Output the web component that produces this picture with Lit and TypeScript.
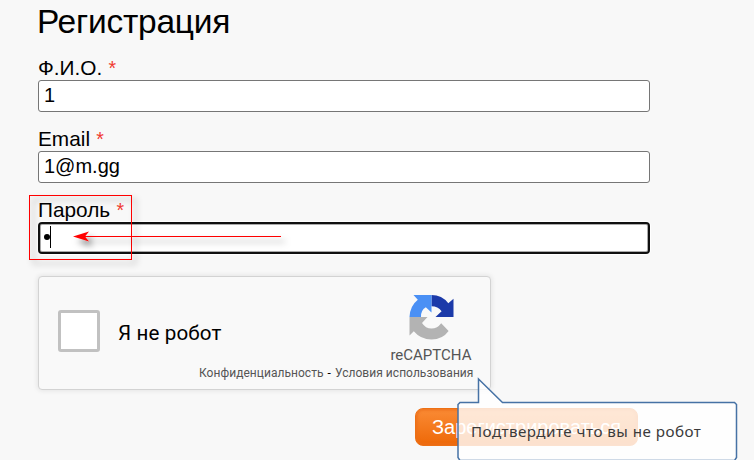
import { LitElement, html, css } from "lit";
import { customElement } from "lit/decorators.js";

@customElement("captcha-box")
class CaptchaBox extends LitElement {
  static styles = css`
    :host {
      display: flex;
      box-sizing: border-box;
      width: 453px;
      height: 114px;
      border: 1px solid #d3d3d3;
      border-radius: 4px;
      background: #f9f9f9;
      box-shadow: 0 0 5px 1px rgba(0, 0, 0, 0.08);
      font-family: Roboto, sans-serif;
      justify-content: space-between;
      padding: 0 17px 0 19px;
    }
    .check {
      display: flex;
      align-items: center;
      gap: 18px;
      height: 108px;
      white-space: nowrap;
      font-size: 20.6px;
      color: #000;
      width: 141px;
      flex: none;
    }
    .box {
      box-sizing: border-box;
      flex: none;
      width: 42px;
      height: 42px;
      border: 3px solid #c1c1c1;
      border-radius: 3px;
      background: #fff;
    }
    .name {
      position: relative;
      top: 2px;
      letter-spacing: 0.12px;
    }
    .brand {
      display: flex;
      flex-direction: column;
      align-items: flex-end;
      color: #555;
      padding-top: 17px;
      white-space: nowrap;
    }
    .logo {
      width: 46px;
      height: 47px;
      margin-right: 18.5px;
    }
    .title {
      font-size: 15px;
      line-height: 18px;
      margin: 5px 2px 0 0;
    }
    .links {
      font-size: 12px;
      line-height: 14px;
      margin-top: 2px;
      letter-spacing: 0.04px;
    }
    .dash {
      color: #000;
      margin: 0 1px;
    }
  `;
  render() {
    return html`
      <div class="check"><span class="box"></span><span class="name">Я не робот</span></div>
      <div class="brand">
        <svg class="logo" viewBox="0 0 46 47">
          <path fill="#1c3aa9" d="M22.500 1Q33 1 39.300 9.200L44.500 4.800V23H26.500L32.600 17.200Q29 12.300 22.500 12.300Z" />
          <path fill="#4a90f5" d="M22.500 1H4.500L8.800 5.800Q1 12 .5 23H12Q11.500 16.500 16.800 13.200L22.500 18.500Z" />
          <path fill="#b3b3b3" d="M.5 23V41.500L4.800 37.200Q11.800 45.500 22.500 45.500Q33.500 45.500 39.600 37L32.200 29.300Q28.500 34.500 22.500 34.500Q16.500 34.500 13 28.900L18.500 23Z" />
        </svg>
        <div class="title">reCAPTCHA</div>
        <div class="links">Конфиденциальность <span class="dash">-</span> Условия использования</div>
      </div>
    `;
  }
}

@customElement("app-root")
class AppRoot extends LitElement {
  static styles = css`
    :host {
      display: block;
      position: relative;
      box-sizing: border-box;
      width: 754px;
      height: 460px;
      overflow: hidden;
      background: #f8f8f8;
      padding-left: 38px;
      font-family: "Liberation Sans", Arial, sans-serif;
      color: #000;
    }
    h1 {
      margin: 0 0 0 -1px;
      height: 56px;
      box-sizing: border-box;
      padding-top: 2px;
      font-weight: 400;
      font-size: 33.5px;
      line-height: 39px;
      letter-spacing: -0.25px;
    }
    .field {
      width: 612px;
      height: 71px;
      font-size: 20.8px;
    }
    .label {
      height: 24px;
      line-height: 24px;
    }
    .star {
      color: #f03a30;
      font-size: 19.5px;
      margin-left: 0.5px;
    }
    .input {
      box-sizing: border-box;
      height: 32px;
      border: 1px solid #767676;
      border-radius: 3px;
      background: #fff;
      padding-left: 5px;
      font-size: 20px;
      line-height: 28px;
    }
    .focused {
      display: flex;
      align-items: center;
      border: 2px solid #101010;
      border-radius: 4px;
      padding: 0 0 2px 4px;
      box-shadow: 0 0 0 1px #fff, inset 0 0 0 1px #aaa;
    }
    .dot {
      width: 6px;
      height: 6px;
      border-radius: 3px;
      background: #000;
    }
    .caret {
      width: 1px;
      height: 22px;
      background: #000;
    }
    captcha-box {
      margin-top: 7px;
    }
    .button {
      box-sizing: border-box;
      width: 223px;
      height: 38px;
      margin: 18px 0 0 377px;
      border-radius: 8px;
      border: 1px solid #ee7014;
      background: linear-gradient(#fa8b35, #ee6807);
      box-shadow: inset 0 0 2px 2px rgba(235, 110, 25, 0.6);
      color: #fff;
      font-size: 20px;
      line-height: 36px;
      text-align: center;
      white-space: nowrap;
    }
    .overlay {
      position: absolute;
      left: 0;
      top: 0;
    }
    .tip {
      position: absolute;
      left: 471px;
      top: 421px;
      font: 15.2px/21px "Noto Sans", sans-serif;
      letter-spacing: 0.47px;
      color: #3a3a3a;
      white-space: nowrap;
    }
  `;

  field(label: string, value: unknown, focused = false) {
    return html`<div class="field">
      <div class="label">${label} <span class="star">*</span></div>
      <div class="input ${focused ? "focused" : ""}">${value}</div>
    </div>`;
  }

  render() {
    return html`
      <h1>Регистрация</h1>
      ${this.field("Ф.И.О.", "1")}
      ${this.field("Email", "1@m.gg")}
      ${this.field("Пароль", html`<span class="dot"></span><span class="caret"></span>`, true)}
      <captcha-box></captcha-box>
      <div class="button">Зарегистрироваться</div>
      <svg class="overlay" width="754" height="460" viewBox="0 0 754 460">
        <defs>
          <filter id="shade" x="-20%" y="-20%" width="150%" height="150%">
            <feDropShadow dx="4" dy="4" stdDeviation="3" flood-color="#000" flood-opacity=".4" />
          </filter>
          <filter id="arrowShade" filterUnits="userSpaceOnUse" x="60" y="220" width="240" height="40">
            <feDropShadow dx="4" dy="5" stdDeviation="3" flood-color="#000" flood-opacity=".5" />
          </filter>
        </defs>
        <rect x="29.5" y="195.5" width="102" height="64" fill="none" stroke="#f00" filter="url(#shade)" />
        <g filter="url(#arrowShade)">
          <path d="M84 236.500H281" stroke="#f00" />
          <path d="M73 236.500L89 231.500L85 236.500L89 241.500Z" fill="#f00" />
        </g>
        <path
          d="M460 402.500H478.500V379L502.500 402.500H734.500L736.500 404.500V457.500L734.500 460.500H460L458 457.500V404.500Z"
          fill="#fff" fill-opacity=".8" stroke="#4672a5" stroke-width="1.500" />
      </svg>
      <div class="tip">Подтвердите что вы не робот</div>
    `;
  }
}
